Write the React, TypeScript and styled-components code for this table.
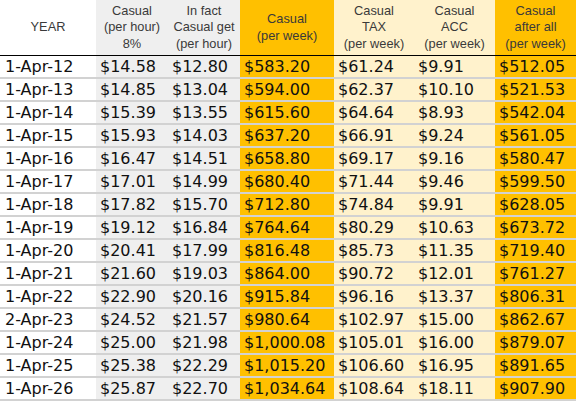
import styled, { createGlobalStyle } from "styled-components";

const GlobalStyle = createGlobalStyle`
  html, body {
    margin: 0;
    padding: 0;
    background: #ffffff;
  }
`;

const colours: any = {
  white: "#ffffff",
  grey: "#efefef",
  orange: "#ffc000",
  cream: "#fff2cc",
};

const columns = [
  { title: ["YEAR"], bg: "white" },
  { title: ["Casual", "(per hour)", "8%"], bg: "grey" },
  { title: ["In fact", "Casual get", "(per hour)"], bg: "grey" },
  { title: ["Casual", "(per week)"], bg: "orange" },
  { title: ["Casual", "TAX", "(per week)"], bg: "cream" },
  { title: ["Casual", "ACC", "(per week)"], bg: "cream" },
  { title: ["Casual", "after all", "(per week)"], bg: "orange" },
];

const rows = [
  ["1-Apr-12", "$14.58", "$12.80", "$583.20", "$61.24", "$9.91", "$512.05"],
  ["1-Apr-13", "$14.85", "$13.04", "$594.00", "$62.37", "$10.10", "$521.53"],
  ["1-Apr-14", "$15.39", "$13.55", "$615.60", "$64.64", "$8.93", "$542.04"],
  ["1-Apr-15", "$15.93", "$14.03", "$637.20", "$66.91", "$9.24", "$561.05"],
  ["1-Apr-16", "$16.47", "$14.51", "$658.80", "$69.17", "$9.16", "$580.47"],
  ["1-Apr-17", "$17.01", "$14.99", "$680.40", "$71.44", "$9.46", "$599.50"],
  ["1-Apr-18", "$17.82", "$15.70", "$712.80", "$74.84", "$9.91", "$628.05"],
  ["1-Apr-19", "$19.12", "$16.84", "$764.64", "$80.29", "$10.63", "$673.72"],
  ["1-Apr-20", "$20.41", "$17.99", "$816.48", "$85.73", "$11.35", "$719.40"],
  ["1-Apr-21", "$21.60", "$19.03", "$864.00", "$90.72", "$12.01", "$761.27"],
  ["1-Apr-22", "$22.90", "$20.16", "$915.84", "$96.16", "$13.37", "$806.31"],
  ["2-Apr-23", "$24.52", "$21.57", "$980.64", "$102.97", "$15.00", "$862.67"],
  ["1-Apr-24", "$25.00", "$21.98", "$1,000.08", "$105.01", "$16.00", "$879.07"],
  ["1-Apr-25", "$25.38", "$22.29", "$1,015.20", "$106.60", "$16.95", "$891.65"],
  ["1-Apr-26", "$25.87", "$22.70", "$1,034.64", "$108.64", "$18.11", "$907.90"],
];

const Sheet = styled.div`
  display: grid;
  grid-template-columns: 96px 72px 72px 94px 80px 81px 81px;
  width: 576px;
  height: 401px;
  overflow: hidden;
`;

const HeadCell = styled.div<{ $bg: string }>`
  height: 56px;
  box-sizing: border-box;
  border-bottom: 1px solid #000;
  background: ${(p) => colours[p.$bg]};
  display: flex;
  flex-direction: column;
  align-items: center;
  justify-content: center;
  font-family: "Liberation Sans", Arial, sans-serif;
  font-size: 12.8px;
  line-height: 16.5px;
  color: #3a3a3a;
  text-align: center;
  white-space: nowrap;
`;

const Cell = styled.div<{ $bg: string; $first?: boolean }>`
  height: 23px;
  box-sizing: border-box;
  border-bottom: 2px solid #d2d2d2;
  background: ${(p) => colours[p.$bg]};
  padding-left: ${(p) => (p.$first ? "5px" : "4px")};
  display: flex;
  align-items: center;
  font-family: "DejaVu Sans", Verdana, sans-serif;
  font-size: 16px;
  color: #111;
  white-space: nowrap;
`;

export default function App() {
  return (
    <>
      <GlobalStyle />
      <Sheet>
        {columns.map((c, i) => (
          <HeadCell key={"h" + i} $bg={c.bg}>
            {c.title.map((t) => (
              <span key={t}>{t}</span>
            ))}
          </HeadCell>
        ))}
        {rows.map((r, ri) =>
          r.map((v, ci) => (
            <Cell key={ri + "-" + ci} $bg={columns[ci].bg} $first={ci === 0}>
              {v}
            </Cell>
          ))
        )}
      </Sheet>
    </>
  );
}
